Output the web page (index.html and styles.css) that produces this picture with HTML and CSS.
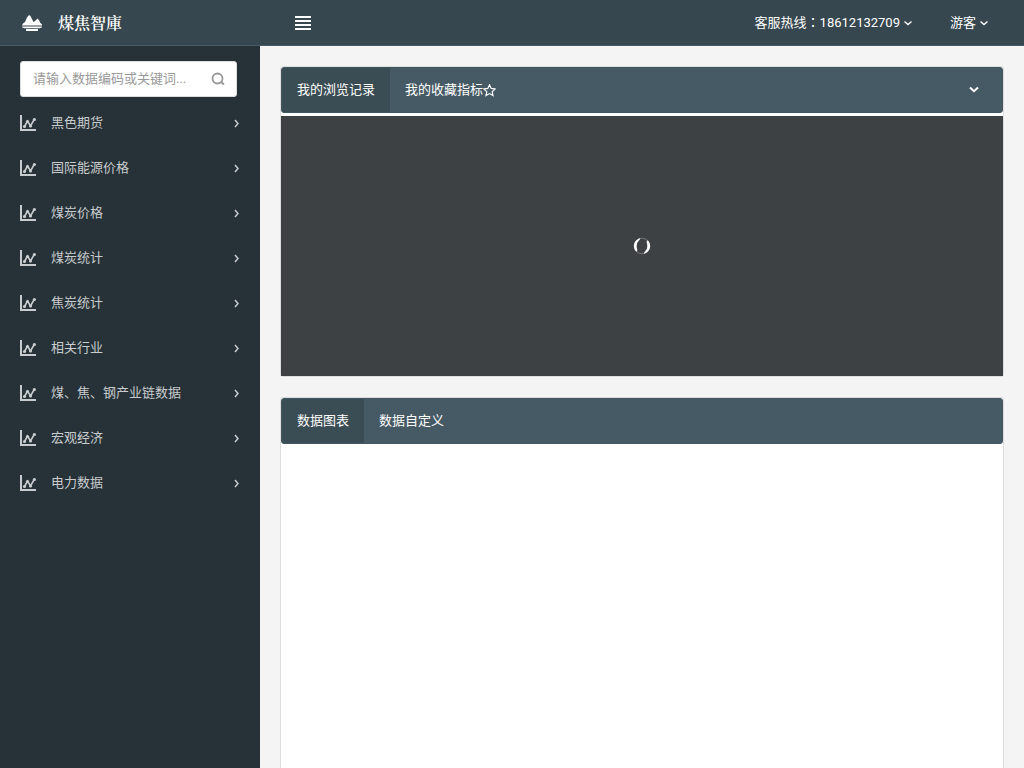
FILE: index.html
```html
<!DOCTYPE html>
<html lang="zh-CN">
<head>
<meta charset="utf-8">
<title>煤焦智庫</title>
<link rel="stylesheet" href="styles.css">
</head>
<body>
<svg class="defs" width="0" height="0" aria-hidden="true">
  <symbol id="chart" viewBox="0 0 16 16">
    <path d="M1 0v15h15" fill="none" stroke="currentColor" stroke-width="2"/>
    <path d="M4.500 11.500L7.500 6L10.500 11L14.500 4" fill="none" stroke="currentColor" stroke-width="1.600"/>
    <circle cx="4.500" cy="11.500" r="1.600" fill="currentColor"/><circle cx="7.500" cy="6.500" r="1.600" fill="currentColor"/><circle cx="10.500" cy="11" r="1.600" fill="currentColor"/><circle cx="14.400" cy="4.500" r="1.600" fill="currentColor"/>
  </symbol>
  <symbol id="right" viewBox="0 0 8 10"><path d="M3 2L6 5.500L3 9" fill="none" stroke="currentColor" stroke-width="1.500"/></symbol>
  <symbol id="down" viewBox="0 0 8 8"><path d="M.5 2.500L4 5.500L7.500 2.500" fill="none" stroke="currentColor" stroke-width="1.400"/></symbol>
</svg>
<header class="navbar">
  <a class="brand" href="#">
    <svg class="brand-mark" viewBox="0 0 20 16" fill="currentColor" aria-hidden="true"><path d="M0 10.500L1 8.500L3 7L5 2.500L7 0L8.500 1L11.500 7L13 6L15.500 3.500L17 5L18 7.500L20 9.500V10.500z"/><path d="M0 11.500h20v.8L17.500 13.300h-15L0 12.300zM4 14h12v2H4z"/></svg>
    <span>煤焦智庫</span>
  </a>
  <button class="menu-toggle" type="button" aria-label="菜单">
    <svg viewBox="0 0 16 14" width="16" height="14" fill="currentColor"><path d="M0 0h16v2H0zM0 4h16v2H0zM0 8h16v2H0zM0 12h16v2H0z"/></svg>
  </button>
  <nav class="account">
    <a href="#"><span>客服热线<span lang="zh-TW" class="colon">：</span>18612132709</span><svg class="caret"><use href="#down"/></svg></a>
    <a href="#">游客<svg class="caret"><use href="#down"/></svg></a>
  </nav>
</header>
<div class="page">
  <aside class="sidebar">
    <form class="search">
      <input class="search-input" type="text" aria-label="搜索" placeholder="请输入数据编码或关键词...">
      <button class="search-button" type="submit" aria-label="搜索"><svg viewBox="0 0 14 14" width="14" height="14" fill="none" stroke="currentColor"><circle cx="6.500" cy="6.500" r="5" stroke-width="1.800"/><path d="M9.500 9.500L13 12.500" stroke-width="2"/></svg></button>
    </form>
    <nav class="menu">
      <a href="#"><svg class="chart"><use href="#chart"/></svg><span>黑色期货</span><svg class="arrow"><use href="#right"/></svg></a>
      <a href="#"><svg class="chart"><use href="#chart"/></svg><span>国际能源价格</span><svg class="arrow"><use href="#right"/></svg></a>
      <a href="#"><svg class="chart"><use href="#chart"/></svg><span>煤炭价格</span><svg class="arrow"><use href="#right"/></svg></a>
      <a href="#"><svg class="chart"><use href="#chart"/></svg><span>煤炭统计</span><svg class="arrow"><use href="#right"/></svg></a>
      <a href="#"><svg class="chart"><use href="#chart"/></svg><span>焦炭统计</span><svg class="arrow"><use href="#right"/></svg></a>
      <a href="#"><svg class="chart"><use href="#chart"/></svg><span>相关行业</span><svg class="arrow"><use href="#right"/></svg></a>
      <a href="#"><svg class="chart"><use href="#chart"/></svg><span>煤、焦、钢产业链数据</span><svg class="arrow"><use href="#right"/></svg></a>
      <a href="#"><svg class="chart"><use href="#chart"/></svg><span>宏观经济</span><svg class="arrow"><use href="#right"/></svg></a>
      <a href="#"><svg class="chart"><use href="#chart"/></svg><span>电力数据</span><svg class="arrow"><use href="#right"/></svg></a>
    </nav>
  </aside>
  <main class="content">
    <section class="panel">
      <div class="tabs">
        <a class="tab active" href="#">我的浏览记录</a>
        <a class="tab" href="#">我的收藏指标<svg class="star" viewBox="0 0 13 13"><path d="M6.500 .8L8.200 4.400L12.200 4.900L9.200 7.600L10 11.600L6.500 9.600L3 11.600L3.800 7.600L.8 4.900L4.800 4.400z" fill="none" stroke="currentColor" stroke-width="1.200"/></svg></a>
        <button class="collapse" type="button" aria-label="收起"><svg viewBox="0 0 10 8" width="10" height="8"><path d="M1 1.500L5 5.200L9 1.500" fill="none" stroke="currentColor" stroke-width="2"/></svg></button>
      </div>
      <div class="loading" role="status" aria-label="加载中">
        <svg viewBox="0 0 18 18" width="18" height="18" fill="currentColor"><circle cx="9" cy="9" r="7.800" fill="none" stroke="currentColor" stroke-opacity=".35" stroke-width=".8"/><path d="M7 1.300A8 8 0 0 0 3 14.500Q4.500 15 4.300 12.500Q2.500 6.500 6 3.500Q7.500 2 7 1.300z"/><path d="M11 16.700A8 8 0 0 0 15 3.500Q13.500 3 13.700 5.500Q15.500 11.500 12 14.500Q10.500 16 11 16.700z"/></svg>
      </div>
    </section>
    <section class="panel panel-fill">
      <div class="tabs">
        <a class="tab active" href="#">数据图表</a>
        <a class="tab" href="#">数据自定义</a>
      </div>
    </section>
  </main>
</div>
</body>
</html>
```
FILE: styles.css
```css
* { box-sizing: border-box; }
body {
  margin: 0;
  min-height: 100vh;
  display: flex;
  flex-direction: column;
  background: #f4f4f4;
  color: #fff;
  font: 13px/20px Roboto, "Noto Sans CJK SC", sans-serif;
}
a { color: inherit; text-decoration: none; }
button { border: 0; padding: 0; background: none; color: inherit; cursor: pointer; }
svg { flex: none; }
.defs { position: absolute; }
.navbar {
  display: flex;
  align-items: center;
  height: 46px;
  background: #37474f;
  border-bottom: 1px solid #455a64;
}
.brand {
  display: flex;
  align-items: center;
  gap: 16px;
  width: 260px;
  padding-left: 22px;
  font: 600 16px/20px "Noto Serif CJK SC", "Noto Sans CJK TC", serif;
}
.brand-mark { width: 20px; height: 16px; }
.menu-toggle { display: flex; margin-left: 35px; }
.account { display: flex; gap: 38px; margin-left: auto; padding-right: 36px; }
.account a { display: flex; align-items: center; gap: 4px; }
.colon { font-family: "Noto Sans CJK TC", sans-serif; }
.caret { width: 8px; height: 8px; }
.page { flex: 1; display: flex; }
.sidebar { flex: none; width: 260px; padding-top: 15px; background: #263238; }
.search {
  display: flex;
  align-items: center;
  height: 36px;
  margin: 0 23px 3px 20px;
  padding: 0 11px 0 12px;
  background: #fff;
  border: 1px solid #ddd;
  border-radius: 3px;
  color: #999;
}
.search-input {
  flex: 1;
  min-width: 0;
  padding: 0;
  border: 0;
  outline: 0;
  background: none;
  color: #333;
  font: inherit;
}
.search-input::placeholder { color: #999; }
.search-button { display: flex; }
.menu { color: #c9ccce; }
.menu a { display: flex; align-items: center; height: 45px; padding: 0 20px; }
.chart { width: 16px; height: 16px; margin-right: 15px; }
.arrow { width: 8px; height: 10px; margin-left: auto; }
.content {
  flex: 1;
  min-width: 0;
  display: flex;
  flex-direction: column;
  gap: 20px;
  padding: 20px 20px 0;
}
.panel { background: #fff; border: 1px solid #ddd; border-radius: 3px; }
.panel-fill { flex: 1; border-bottom: 0; border-radius: 3px 3px 0 0; }
.tabs {
  display: flex;
  height: 46px;
  background: #465a65;
  border: 1px solid #435760;
  border-radius: 3px;
  overflow: hidden;
}
.tab { display: flex; align-items: center; padding: 0 15px; }
.tab.active { background: #3b4d54; }
.star { width: 13px; height: 13px; }
.collapse { display: flex; align-items: center; margin: 0 23px 0 auto; }
.loading {
  display: flex;
  align-items: center;
  justify-content: center;
  height: 260px;
  margin-top: 3px;
  background: #3d4144;
}
```
